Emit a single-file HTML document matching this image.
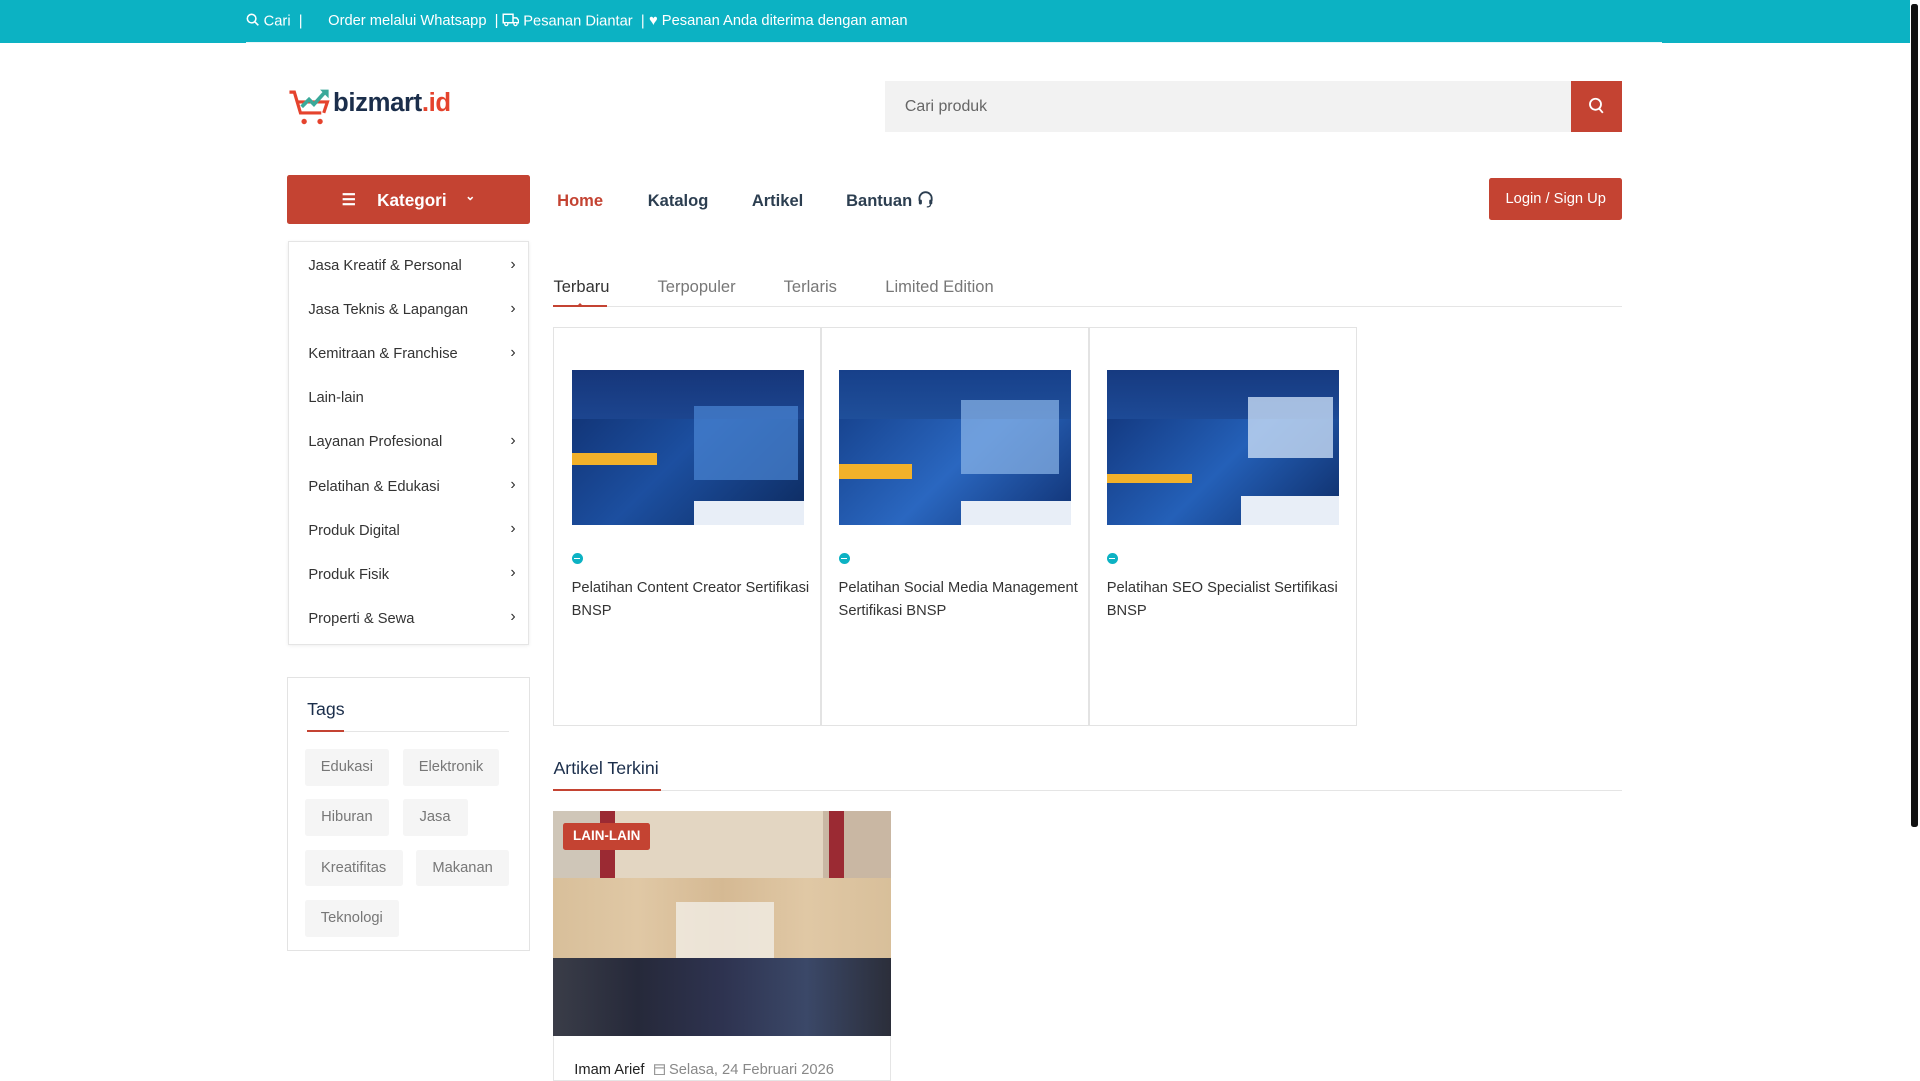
<!DOCTYPE html>
<html><head><meta charset="utf-8"><style>
html{zoom:1.22449}
*{box-sizing:border-box;margin:0;padding:0}
body{width:1568px;height:883px;overflow:hidden;background:#fff;font-family:"Liberation Sans",Arial,sans-serif;position:relative;color:#333}
.abs{position:absolute}
.top{left:0;top:0;width:1560px;height:35px;background:#0cb2c3;color:#fff;font-size:12px}
.top span{position:absolute;top:11px;white-space:nowrap}
.sb{left:1561px;top:3px;width:5px;height:672px;background:#111;border-radius:2px}
.search{left:723px;top:66px;width:560px;height:42px;background:#f2f2f2;font-size:13px;color:#666;padding:14px 16px}
.sbtn{left:1283px;top:66px;width:42px;height:42px;background:#c44332}
.kat{left:234px;top:143px;width:199px;height:40px;background:#c44332;border-radius:2px;color:#fff;font-weight:bold;font-size:14px}
.nav{top:156px;font-size:13.5px;font-weight:bold;color:#2c3e50}
.login{left:1216px;top:145px;width:109px;height:35px;background:#c44332;border-radius:2px;color:#fff;font-size:12px;text-align:center;line-height:35px}
.cats{left:235px;top:197px;width:197px;height:330px;border:1px solid #e5e5e5;box-shadow:0 1px 3px rgba(0,0,0,.08)}
.cat{position:absolute;left:16px;font-size:12px;color:#333}
.chev{position:absolute;right:10px;font-size:13px;color:#333}
.tab{top:226px;font-size:13.5px;color:#777}
.card{top:267px;width:219px;height:326px;border:1px solid #e3e3e3}
.img{position:absolute;left:14px;top:34px;width:190px;height:127px;overflow:hidden}
.dot{position:absolute;left:14px;top:184px;width:9px;height:9px;border-radius:50%;background:#0cb2c3}
.dot:after{content:"";position:absolute;left:2px;top:4px;width:5px;height:1px;background:#fff}
.ct{position:absolute;left:14px;top:203px;width:198px;font-size:12px;line-height:19px;color:#333}
.tags{left:234px;top:553px;width:199px;height:224px;border:1px solid #e3e3e3}
.tag{position:absolute;height:30px;background:#f5f5f5;color:#777;font-size:12px;line-height:30px;text-align:center;border-radius:2px}
</style></head><body>
<div class="abs top">
<span style="left:201px"><svg width="11" height="11" viewBox="0 0 12 12" style="vertical-align:-1px"><circle cx="5" cy="5" r="3.8" fill="none" stroke="#fff" stroke-width="1.4"/><path d="M8 8l3 3" stroke="#fff" stroke-width="1.4"/></svg> Cari &nbsp;|</span>
<span style="left:268px">Order melalui Whatsapp &nbsp;|</span>
<span style="left:410px"><svg width="14" height="11" viewBox="0 0 14 11" style="vertical-align:-1px"><path d="M1 1h8v7H1zM9 4h3l1.5 2v2H9" fill="none" stroke="#fff" stroke-width="1.2"/><circle cx="3.5" cy="9" r="1.3" fill="#0cb2c3" stroke="#fff"/><circle cx="11" cy="9" r="1.3" fill="#0cb2c3" stroke="#fff"/></svg> Pesanan Diantar &nbsp;|</span>
<span style="left:530px">&#9829; Pesanan Anda diterima dengan aman</span>
</div>
<div class="abs" style="left:201px;top:34px;width:1156px;height:1px;background:#e8f6f8"></div>
<div class="abs sb"></div>
<div class="abs" style="left:234px;top:70px;width:150px;height:34px">
<svg width="40" height="34" viewBox="0 0 40 34" style="position:absolute;left:0;top:0"><path d="M2 5h4l5 17h17" fill="none" stroke="#e5432d" stroke-width="2.6"/><path d="M9 13h24l-3 9" fill="none" stroke="#e5432d" stroke-width="2.6"/><circle cx="14" cy="29" r="2.2" fill="#e5432d"/><circle cx="27" cy="29" r="2.2" fill="#e5432d"/><path d="M12 17l6-6 4 4 9-10" fill="none" stroke="#3aa99a" stroke-width="3"/><path d="M27 3h7v7z" fill="#3aa99a"/></svg>
<div style="position:absolute;left:38px;top:3px;font-size:21px;font-weight:bold;color:#1b2e4b;letter-spacing:-0.3px">bizmart<span style="color:#e5432d">.id</span></div>
</div>
<div class="abs search">Cari produk</div>
<div class="abs sbtn"><svg width="42" height="42" viewBox="0 0 42 42"><circle cx="20" cy="19" r="4.5" fill="none" stroke="#fff" stroke-width="1.5"/><path d="M23 22.5l3 3.5" stroke="#fff" stroke-width="1.5"/></svg></div>
<div class="abs kat"><span style="position:absolute;left:45px;top:12px;font-size:13px">&#9776;</span><span style="position:absolute;left:74px;top:12px">Kategori</span><span style="position:absolute;left:146px;top:11px;font-size:10px">&#8964;</span></div>
<div class="abs nav" style="left:455px;color:#c44332">Home</div>
<div class="abs nav" style="left:529px">Katalog</div>
<div class="abs nav" style="left:614px">Artikel</div>
<div class="abs nav" style="left:691px">Bantuan <svg width="14" height="14" viewBox="0 0 14 14" style="vertical-align:-2px"><path d="M2 8V6a5 5 0 0110 0v2" fill="none" stroke="#2c3e50" stroke-width="1.5"/><rect x="1.5" y="7" width="2.5" height="4" rx="1" fill="#2c3e50"/><rect x="10" y="7" width="2.5" height="4" rx="1" fill="#2c3e50"/><path d="M11 11q0 2-3 2" fill="none" stroke="#2c3e50"/></svg></div>
<div class="abs login">Login / Sign Up</div>
<div class="abs cats">
<div class="cat" style="top:13px">Jasa Kreatif &amp; Personal</div><div class="chev" style="top:11px">&#8250;</div>
<div class="cat" style="top:49px">Jasa Teknis &amp; Lapangan</div><div class="chev" style="top:47px">&#8250;</div>
<div class="cat" style="top:85px">Kemitraan &amp; Franchise</div><div class="chev" style="top:83px">&#8250;</div>
<div class="cat" style="top:121px">Lain-lain</div>
<div class="cat" style="top:157px">Layanan Profesional</div><div class="chev" style="top:155px">&#8250;</div>
<div class="cat" style="top:193px">Pelatihan &amp; Edukasi</div><div class="chev" style="top:191px">&#8250;</div>
<div class="cat" style="top:229px">Produk Digital</div><div class="chev" style="top:227px">&#8250;</div>
<div class="cat" style="top:265px">Produk Fisik</div><div class="chev" style="top:263px">&#8250;</div>
<div class="cat" style="top:301px">Properti &amp; Sewa</div><div class="chev" style="top:299px">&#8250;</div>
</div>
<div class="abs tab" style="left:452px;color:#333">Terbaru</div>
<div class="abs tab" style="left:537px">Terpopuler</div>
<div class="abs tab" style="left:640px">Terlaris</div>
<div class="abs tab" style="left:723px">Limited Edition</div>
<div class="abs" style="left:452px;top:250px;width:873px;height:1px;background:#e5e5e5"></div>
<div class="abs" style="left:452px;top:249px;width:44px;height:2px;background:#c44332"></div>
<div class="abs" style="left:470px;top:244px;width:0;height:0;border:4px solid transparent;border-bottom-color:#c44332"></div>
<div class="abs card" style="left:452px"><div class="img" style="background:linear-gradient(135deg,#0f2d6b,#1c4fa0 50%,#0d2a5e)"><div style="position:absolute;left:0;top:0;right:0;height:40px;background:linear-gradient(#16367a,#1c458f)"></div><div style="position:absolute;left:0;top:68px;width:70px;height:10px;background:#f2b12a"></div><div style="position:absolute;left:100px;top:30px;width:85px;height:60px;background:#4a86d4;opacity:.7"></div><div style="position:absolute;right:0;bottom:0;width:90px;height:20px;background:#e8eef7"></div></div><div class="dot"></div><div class="ct">Pelatihan Content Creator Sertifikasi BNSP</div></div>
<div class="abs card" style="left:670px"><div class="img" style="background:linear-gradient(135deg,#123a82,#2a67c0 55%,#103172)"><div style="position:absolute;left:0;top:0;right:0;height:40px;background:linear-gradient(#17408a,#1f4f9a)"></div><div style="position:absolute;left:0;top:77px;width:60px;height:12px;background:#f2b12a"></div><div style="position:absolute;left:100px;top:25px;width:80px;height:60px;background:#8bb6ea;opacity:.7"></div><div style="position:absolute;right:0;bottom:0;width:90px;height:20px;background:#e8eef7"></div></div><div class="dot"></div><div class="ct">Pelatihan Social Media Management Sertifikasi BNSP</div></div>
<div class="abs card" style="left:889px"><div class="img" style="background:linear-gradient(135deg,#0f2f72,#2460b8 55%,#0e2c66)"><div style="position:absolute;left:0;top:0;right:0;height:40px;background:linear-gradient(#163a80,#1d4a96)"></div><div style="position:absolute;left:0;top:85px;width:70px;height:8px;background:#f2b12a"></div><div style="position:absolute;left:115px;top:22px;width:70px;height:50px;background:#c8dcf5;opacity:.8"></div><div style="position:absolute;right:0;bottom:0;width:80px;height:24px;background:#e8eef7"></div></div><div class="dot"></div><div class="ct">Pelatihan SEO Specialist Sertifikasi BNSP</div></div>
<div class="abs tags">
<div style="position:absolute;left:16px;top:17px;font-size:14.5px;color:#1b2e4b">Tags</div>
<div style="position:absolute;left:16px;top:43px;width:165px;height:1px;background:#e5e5e5"></div>
<div style="position:absolute;left:16px;top:42px;width:30px;height:2px;background:#c44332"></div>
<div class="tag" style="left:14px;top:58px;width:69px">Edukasi</div>
<div class="tag" style="left:94px;top:58px;width:79px">Elektronik</div>
<div class="tag" style="left:14px;top:99px;width:69px">Hiburan</div>
<div class="tag" style="left:94px;top:99px;width:53px">Jasa</div>
<div class="tag" style="left:14px;top:140px;width:80px">Kreatifitas</div>
<div class="tag" style="left:105px;top:140px;width:76px">Makanan</div>
<div class="tag" style="left:14px;top:181px;width:77px">Teknologi</div>
</div>
<div class="abs" style="left:452px;top:619px;font-size:14.5px;color:#1b2e4b">Artikel Terkini</div>
<div class="abs" style="left:452px;top:645px;width:873px;height:1px;background:#e5e5e5"></div>
<div class="abs" style="left:452px;top:644px;width:88px;height:2px;background:#c44332"></div>
<div class="abs" style="left:452px;top:662px;width:276px;height:221px;border:1px solid #e5e5e5"></div>
<div class="abs" style="left:452px;top:662px;width:276px;height:184px;overflow:hidden;background:#c9b7a3">
<div style="position:absolute;left:0;top:0;width:40px;height:184px;background:#cfc6b8"></div>
<div style="position:absolute;left:38px;top:0;width:12px;height:70px;background:#9b2a33"></div>
<div style="position:absolute;left:50px;top:0;width:170px;height:65px;background:#e3d6c2"></div>
<div style="position:absolute;left:225px;top:0;width:12px;height:70px;background:#9b2a33"></div>
<div style="position:absolute;left:0;top:55px;width:276px;height:65px;background:linear-gradient(90deg,#d8bf9a,#e0c8a5,#d5b993,#e0c8a5,#d8bf9a)"></div>
<div style="position:absolute;left:100px;top:75px;width:80px;height:45px;background:#f1ede6;opacity:.8"></div>
<div style="position:absolute;left:0;top:120px;width:276px;height:64px;background:linear-gradient(90deg,#3a3d48,#26293a,#2e3350,#3b4868,#2b2e3a)"></div>
<div style="position:absolute;left:8px;top:10px;padding:0 8px;height:22px;line-height:22px;background:#c44332;color:#fff;font-size:11px;font-weight:bold;border-radius:2px">LAIN-LAIN</div>
</div>
<div class="abs" style="left:469px;top:867px;font-size:12px;color:#222">Imam Arief</div>
<div class="abs" style="left:534px;top:867px;font-size:12px;color:#888"><svg width="9" height="10" viewBox="0 0 9 10" style="vertical-align:-1px"><rect x="0.5" y="1.5" width="8" height="8" fill="none" stroke="#999"/><path d="M0.5 4h8" stroke="#999"/></svg> Selasa, 24 Februari 2026</div>
</body></html>
